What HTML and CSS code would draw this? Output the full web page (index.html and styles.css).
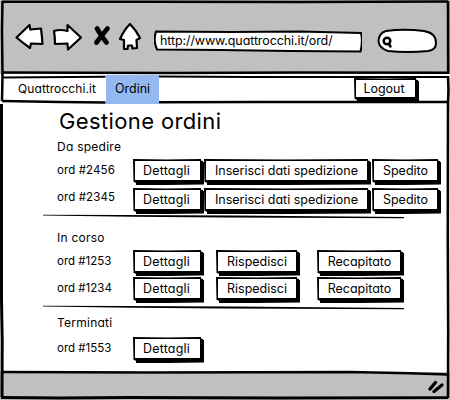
FILE: index.html
```
<!DOCTYPE html>
<html lang="it">
<head>
<meta charset="utf-8">
<title>Gestione ordini</title>
<link rel="stylesheet" href="styles.css">
</head>
<body>
<div class="window">
  <header class="toolbar">
    <svg class="icons" width="134" height="36" viewBox="12 19 134 36">
      <g fill="#fff" stroke="#000" stroke-width="2.200" stroke-linejoin="round">
        <path d="M16.5 37.500L29.500 25L30.300 29.500L41 28.500Q42 36 42.500 44L31 43.500L30 48Q23 43 16.500 37.500Z"/>
        <path d="M54 31Q60 29 67.500 31L67.500 25L81 37.500L68 49.500L67.500 43.500L55 44Q55 37 54 31Z"/>
        <path d="M130 24Q136 30 140 38L136.500 40L137 48L132.500 48.500L132 45.500L128 45.500L127.500 49L124 49L124 40L120 39Q124 30 130 24Z"/>
      </g>
      <g fill="none" stroke="#000" stroke-width="4.800" stroke-linecap="round"><path d="M97 28.500Q101 36 106.500 42.500M107.500 28.500Q102 35 96.500 42.500"/></g>
    </svg>
    <div class="address">
      <svg class="outline" width="208" height="24" viewBox="154 30 208 24"><path d="M156 31.500L230 32L300 31.500L361 33Q363 41 360.500 51.500L290 51L220 50L157 49.500Q153 41 156 31.500Z"/></svg>
      <span>http://www.quattrocchi.it/ord/</span>
    </div>
    <svg class="search" width="61" height="26" viewBox="377 28 61 26">
      <path fill="#fff" stroke="#000" stroke-width="2" d="M386 31Q404 28.500 424 31Q436 33 436 43Q436 50 428 51Q407 53 388 51Q379 48 378.500 41Q379 33 386 31Z"/>
      <g fill="none" stroke="#000" stroke-width="2.500" stroke-linecap="round"><circle cx="387" cy="41" r="3.300"/><path d="M389 44L390.500 46.500"/></g>
    </svg>
  </header>
  <nav class="nav">
    <a class="brand">Quattrocchi.it</a>
    <a class="tab">Ordini</a>
    <button class="btn logout"><span>Logout</span></button>
  </nav>
  <main class="content">
    <h1>Gestione ordini</h1>
    <section>
      <h2>Da spedire</h2>
      <div class="row"><span class="order">ord #2456</span><button class="btn detail"><span>Dettagli</span></button><button class="btn insert"><span>Inserisci dati spedizione</span></button><button class="btn sent"><span>Spedito</span></button></div>
      <div class="row second"><span class="order">ord #2345</span><button class="btn detail"><span>Dettagli</span></button><button class="btn insert"><span>Inserisci dati spedizione</span></button><button class="btn sent"><span>Spedito</span></button></div>
    </section>
    <svg class="rule" width="361" height="5" viewBox="0 0 361 5"><path d="M0 .8L80 .9L190 1.600L361 3V4.300L180 3.400L90 2.800L0 1.600Z"/></svg>
    <section class="progress">
      <h2>In corso</h2>
      <div class="row"><span class="order">ord #1253</span><button class="btn detail"><span>Dettagli</span></button><button class="btn resend"><span>Rispedisci</span></button><button class="btn delivered"><span>Recapitato</span></button></div>
      <div class="row tight"><span class="order">ord #1234</span><button class="btn detail"><span>Dettagli</span></button><button class="btn resend"><span>Rispedisci</span></button><button class="btn delivered"><span>Recapitato</span></button></div>
    </section>
    <svg class="rule" width="361" height="5" viewBox="0 0 361 5"><path d="M0 .8L80 .9L190 1.600L361 3V4.300L180 3.400L90 2.800L0 1.600Z"/></svg>
    <section class="done">
      <h2>Terminati</h2>
      <div class="row"><span class="order">ord #1553</span><button class="btn detail"><span>Dettagli</span></button></div>
    </section>
  </main>
  <footer class="status">
    <svg width="18" height="14" viewBox="427 380 18 14"><g stroke="#000" stroke-width="3.400" stroke-linecap="round"><path d="M430 389L435.500 382.500M434 391.500L442 385"/></g></svg>
  </footer>
  <svg class="frame" width="450" height="400" viewBox="0 0 450 400">
    <path d="M2 1.800L150 1.700L300 1.900L448 1.600" stroke-width="2.500"/>
    <path d="M2.500 1L2 30L2.500 76L2 101" stroke-width="2.500"/>
    <path d="M1.500 104L1.500 182L1.500 300L2.200 340L2 397" stroke-width="3"/>
    <path d="M448 1L448.200 74M448 76L448.500 90L448 104L447.800 240L448.200 330L448 398" stroke-width="2.600"/>
    <path d="M2 72.500L171 73L300 72.500L448 72.800" stroke-width="2.600"/>
    <path d="M2 77.500L105.500 76.700M159 76.500L250 77L448 77" stroke-width="2"/>
    <path d="M2 101L60 102L105.500 102.500M159 102.300L260 102L354 102L448 102" stroke-width="2.500"/>
    <path d="M2 372L150 372.500L350 372L410 373.300L448 374.500" stroke-width="2.500"/>
    <path d="M1 397.500L60 398L130 397.500L280 398L448 397.700" stroke-width="2.800"/>
  </svg>
</div>
</body>
</html>
```
FILE: styles.css
```
* { box-sizing: border-box; }
body {
  margin: 0;
  background: #fff;
  color: #000;
  font-family: Inter, Lato, sans-serif;
  font-feature-settings: "cv11";
  font-size: 13px;
}
.window {
  position: relative;
  width: 450px;
  height: 400px;
  display: flex;
  flex-direction: column;
  overflow: hidden;
}
.frame {
  position: absolute;
  inset: 0;
  fill: none;
  stroke: #000;
  pointer-events: none;
}
.toolbar {
  height: 74px;
  flex: none;
  display: flex;
  align-items: flex-start;
  padding: 19px 0 0 12px;
  background: #c0c0c0;
}
.icons { flex: none; }
.address {
  position: relative;
  width: 208px;
  height: 24px;
  margin: 11px 15px 0 8px;
  padding-left: 6px;
  line-height: 21px;
  font-size: 12.5px;
  letter-spacing: -0.1px;
  white-space: nowrap;
}
.address span { position: relative; }
.outline {
  position: absolute;
  left: 0;
  top: 0;
  fill: #fff;
  stroke: #000;
  stroke-width: 2;
}
.search { margin-top: 9px; flex: none; }
.nav {
  height: 30px;
  flex: none;
  display: flex;
  align-items: stretch;
  padding-top: 1px;
  line-height: 27px;
}
.brand {
  width: 106px;
  padding-left: 18px;
  font-size: 12px;
  letter-spacing: 0.1px;
}
.tab {
  width: 53px;
  background: #94b9f0;
  text-align: center;
  font-size: 12.5px;
}
.btn {
  position: relative;
  flex: none;
  width: 68px;
  height: 23px;
  margin: 0;
  padding: 0;
  border: 2px solid #000;
  border-right-width: 1.5px;
  background: #fff;
  box-shadow: 1px 1px 0 #000, 2px 2px 0 #000, 3px 3px 0 #000;
  clip-path: polygon(0 0, 50% 0.5px, 100% 0, calc(100% + 0.5px) 2px, calc(100% + 3px) 2px, calc(100% + 3px) calc(100% + 2.5px), 50% calc(100% + 3px), 3px calc(100% + 3px), 3px calc(100% + 0.5px), 0.5px 100%);
  font: inherit;
  font-size: 12.5px;
  line-height: 20px;
  color: #000;
  white-space: nowrap;
}
.detail { letter-spacing: 0.2px; padding-right: 2px; }
.logout {
  width: 62px;
  height: 21px;
  margin: 3px 0 0 195px;
  padding: 0 3px 0 0;
  line-height: 17px;
}
.content {
  height: 268px;
  flex: none;
  padding-left: 43px;
}
h1 {
  height: 34px;
  margin: 0;
  padding-left: 16px;
  font-size: 22px;
  font-weight: 400;
  line-height: 34px;
  letter-spacing: 0.37px;
}
h2 {
  height: 21px;
  margin: 0;
  padding-left: 14px;
  font-size: 12px;
  font-weight: 400;
  line-height: 18px;
  letter-spacing: 0.25px;
}
.row { height: 26px; display: flex; }
.second { margin-top: 3px; }
.order {
  width: 90px;
  padding-left: 14px;
  font-size: 11.5px;
  line-height: 22px;
  letter-spacing: 0.1px;
  white-space: nowrap;
}
.second .order { line-height: 18px; }
.insert { width: 164px; margin-left: 3px; }
.sent { width: 66px; margin-left: 4px; }
.resend { width: 81px; margin-left: 15px; }
.delivered { width: 84px; margin-left: 20px; letter-spacing: -0.02px; }
.rule { display: block; }
.progress { margin-top: 9px; }
.progress h2 { line-height: 20px; }
.progress .row { padding-top: 1px; }
.progress .tight { margin-top: 1px; }
.progress .order { line-height: 23px; letter-spacing: 0; }
.rule + .progress + .rule { margin-top: 3px; }
.done { padding-top: 4px; }
.done h2 { height: 23px; line-height: 17px; }
.done .order { letter-spacing: 0; }
.status {
  height: 28px;
  flex: none;
  display: flex;
  justify-content: flex-end;
  padding: 8px 5px 0 0;
  background: #c0c0c0;
}
```
